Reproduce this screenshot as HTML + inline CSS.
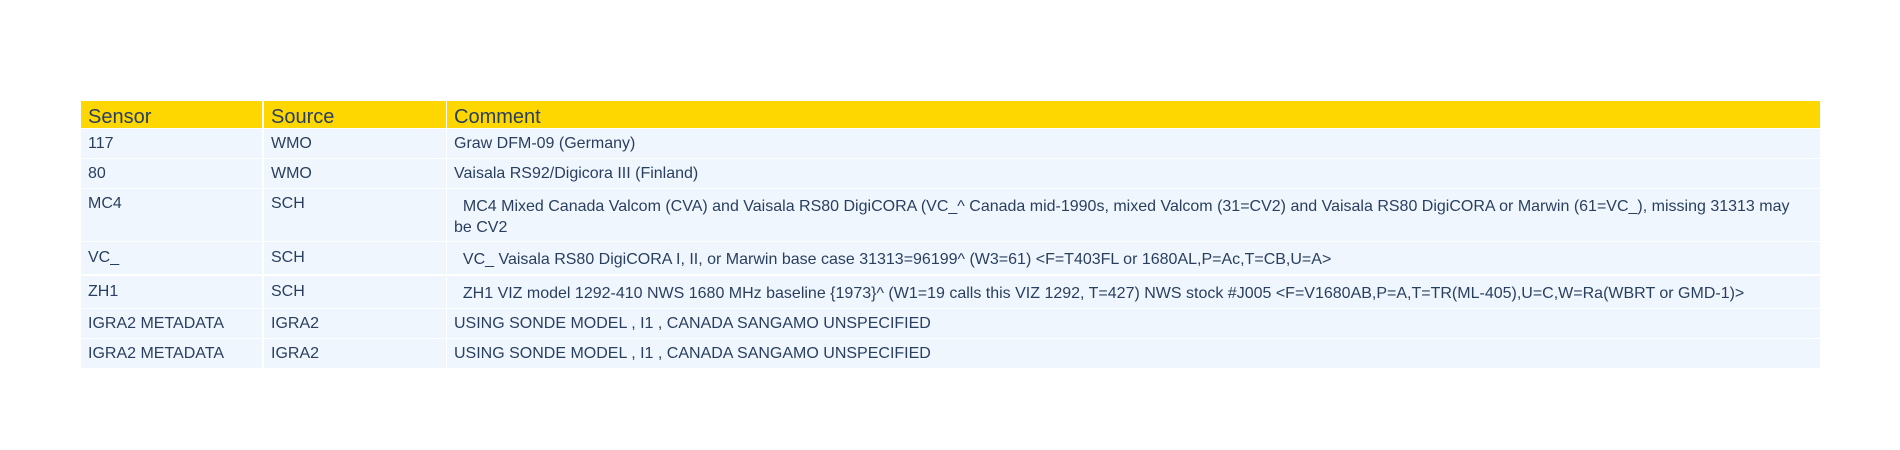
<!DOCTYPE html>
<html><head><meta charset="utf-8"><style>
body{margin:0;width:1900px;height:450px;background:#fff;position:relative;overflow:hidden;font-family:"Liberation Sans",sans-serif;color:#2a3f5f}
.c{position:absolute;background:#eff6fd}
.h{position:absolute;background:#ffd700}
.t{position:absolute;font-size:16px;line-height:17px;white-space:pre}
.ht{position:absolute;font-size:20px;line-height:20px;white-space:pre}
</style></head><body>
<div class="h" style="left:81px;top:101px;width:181px;height:27px"></div>
<div class="h" style="left:264px;top:101px;width:182px;height:27px"></div>
<div class="h" style="left:447px;top:101px;width:1373px;height:27px"></div>
<div class="ht" style="left:88px;top:107px">Sensor</div>
<div class="ht" style="left:271px;top:107px">Source</div>
<div class="ht" style="left:454px;top:107px">Comment</div>

<div class="c" style="left:81px;top:129px;width:181px;height:29px"></div>
<div class="c" style="left:264px;top:129px;width:182px;height:29px"></div>
<div class="c" style="left:447px;top:129px;width:1373px;height:29px"></div>
<div class="t" style="left:88px;top:135px">117</div>
<div class="t" style="left:271px;top:135px">WMO</div>
<div class="t" style="left:454px;top:135px">Graw DFM-09 (Germany)</div>

<div class="c" style="left:81px;top:159px;width:181px;height:29px"></div>
<div class="c" style="left:264px;top:159px;width:182px;height:29px"></div>
<div class="c" style="left:447px;top:159px;width:1373px;height:29px"></div>
<div class="t" style="left:88px;top:165px">80</div>
<div class="t" style="left:271px;top:165px">WMO</div>
<div class="t" style="left:454px;top:165px">Vaisala RS92/Digicora III (Finland)</div>

<div class="c" style="left:81px;top:189px;width:181px;height:52px"></div>
<div class="c" style="left:264px;top:189px;width:182px;height:52px"></div>
<div class="c" style="left:447px;top:189px;width:1373px;height:52px"></div>
<div class="t" style="left:88px;top:195px">MC4</div>
<div class="t" style="left:271px;top:195px">SCH</div>
<div class="t" style="left:454px;top:196px;line-height:21px">  MC4 Mixed Canada Valcom (CVA) and Vaisala RS80 DigiCORA (VC_^ Canada mid-1990s, mixed Valcom (31=CV2) and Vaisala RS80 DigiCORA or Marwin (61=VC_), missing 31313 may
be CV2</div>

<div class="c" style="left:81px;top:242px;width:181px;height:32px"></div>
<div class="c" style="left:264px;top:242px;width:182px;height:32px"></div>
<div class="c" style="left:447px;top:242px;width:1373px;height:32px"></div>
<div class="t" style="left:88px;top:249px">VC_</div>
<div class="t" style="left:271px;top:249px">SCH</div>
<div class="t" style="left:454px;top:251px">  VC_ Vaisala RS80 DigiCORA I, II, or Marwin base case 31313=96199^ (W3=61) &lt;F=T403FL or 1680AL,P=Ac,T=CB,U=A&gt;</div>

<div class="c" style="left:81px;top:276px;width:181px;height:32px"></div>
<div class="c" style="left:264px;top:276px;width:182px;height:32px"></div>
<div class="c" style="left:447px;top:276px;width:1373px;height:32px"></div>
<div class="t" style="left:88px;top:283px">ZH1</div>
<div class="t" style="left:271px;top:283px">SCH</div>
<div class="t" style="left:454px;top:285px">  ZH1 VIZ model 1292-410 NWS 1680 MHz baseline {1973}^ (W1=19 calls this VIZ 1292, T=427) NWS stock #J005 &lt;F=V1680AB,P=A,T=TR(ML-405),U=C,W=Ra(WBRT or GMD-1)&gt;</div>

<div class="c" style="left:81px;top:309px;width:181px;height:29px"></div>
<div class="c" style="left:264px;top:309px;width:182px;height:29px"></div>
<div class="c" style="left:447px;top:309px;width:1373px;height:29px"></div>
<div class="t" style="left:88px;top:315px">IGRA2 METADATA</div>
<div class="t" style="left:271px;top:315px">IGRA2</div>
<div class="t" style="left:454px;top:315px">USING SONDE MODEL , I1 , CANADA SANGAMO UNSPECIFIED</div>

<div class="c" style="left:81px;top:339px;width:181px;height:29px"></div>
<div class="c" style="left:264px;top:339px;width:182px;height:29px"></div>
<div class="c" style="left:447px;top:339px;width:1373px;height:29px"></div>
<div class="t" style="left:88px;top:345px">IGRA2 METADATA</div>
<div class="t" style="left:271px;top:345px">IGRA2</div>
<div class="t" style="left:454px;top:345px">USING SONDE MODEL , I1 , CANADA SANGAMO UNSPECIFIED</div>
</body></html>
